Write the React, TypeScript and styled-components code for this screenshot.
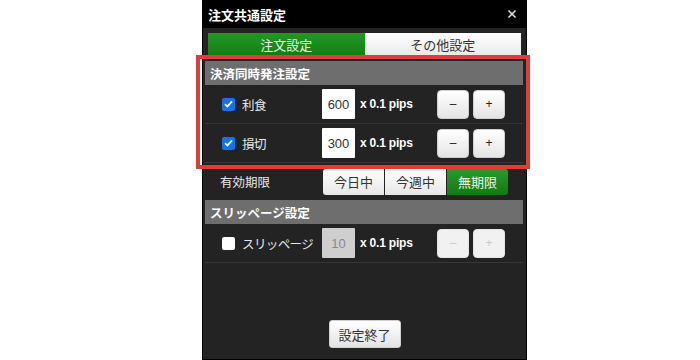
import React, { useState } from 'react';
import styled, { createGlobalStyle } from 'styled-components';

const GlobalStyle = createGlobalStyle`
  body {
    margin: 0;
    background: #fff;
    font-family: "Noto Sans CJK JP", "Noto Sans", sans-serif;
  }
`;

const Page = styled.div`
  position: relative;
  width: 700px;
  height: 360px;
  padding-left: 202px;
  box-sizing: border-box;
  overflow: hidden;
`;

const Panel = styled.div`
  width: 325px;
  height: 360px;
  box-sizing: border-box;
  background: #232323;
  border: 1px solid #000;
  border-top: none;
  display: flex;
  flex-direction: column;
`;

const TitleBar = styled.div`
  height: 28px;
  flex: none;
  background: #000;
  display: flex;
  align-items: center;
  justify-content: space-between;
  padding: 0 9px 0 5px;
  color: #fff;
  font-size: 13px;
  font-weight: 700;
`;

const CloseButton = styled.button`
  border: none;
  background: none;
  padding: 0;
  width: 10px;
  height: 10px;
  display: flex;
  cursor: pointer;
`;

const Tabs = styled.div`
  margin: 5px 5px 0 5px;
  height: 22px;
  display: grid;
  grid-template-columns: 1fr 1fr;
`;

const Tab = styled.button<{ $active?: boolean }>`
  border: none;
  margin: 0;
  padding: 0;
  font-family: inherit;
  font-size: 13px;
  cursor: pointer;
  color: ${(p) => (p.$active ? '#e6f3e6' : '#333')};
  background: ${(p) =>
    p.$active
      ? 'linear-gradient(#259725, #137f13)'
      : 'linear-gradient(#ffffff, #e9e9e9)'};
`;

const SectionHeader = styled.div<{ $top?: number }>`
  margin: ${(p) => p.$top ?? 0}px 3px 0 2px;
  height: 24px;
  flex: none;
  background: #6e6e6e;
  color: #fff;
  font-size: 12.5px;
  font-weight: 700;
  display: flex;
  align-items: center;
  padding-left: 5px;
`;

const Row = styled.div<{ $line?: boolean; $h?: number }>`
  margin: 0 3px 0 2px;
  height: ${(p) => p.$h ?? 38}px;
  flex: none;
  display: flex;
  align-items: center;
  padding-left: 17px;
  border-bottom: ${(p) => (p.$line ? '1px solid #363636' : 'none')};
`;

const CheckCell = styled.label`
  width: 100px;
  display: flex;
  align-items: center;
  color: #e8e8e8;
  font-size: 12.5px;
  letter-spacing: -0.6px;
  cursor: pointer;
`;

const Box = styled.span<{ $on: boolean }>`
  width: 13px;
  height: 13px;
  flex: none;
  border-radius: 2px;
  box-sizing: border-box;
  background: ${(p) => (p.$on ? '#1473e6' : '#fff')};
  display: flex;
  align-items: center;
  justify-content: center;
  margin-right: 7px;
`;

const HiddenInput = styled.input`
  display: none;
`;

const ValueInput = styled.input<{ disabled?: boolean }>`
  width: 33px;
  height: 30px;
  box-sizing: border-box;
  border: none;
  border-radius: 1px;
  padding: 0;
  text-align: center;
  font-family: "Liberation Sans", Arial, sans-serif;
  font-size: 13px;
  color: ${(p) => (p.disabled ? '#8a8a8a' : '#333')};
  background: ${(p) => (p.disabled ? '#cfcfcf' : '#fff')};
  outline: none;
`;

const Unit = styled.span`
  width: 82px;
  padding-left: 5px;
  box-sizing: border-box;
  color: #fff;
  font-family: "Liberation Sans", Arial, sans-serif;
  font-weight: 700;
  font-size: 12px;
  letter-spacing: -0.2px;
`;

const StepButton = styled.button<{ disabled?: boolean }>`
  width: 32px;
  height: 29px;
  margin-right: 4px;
  border: 1px solid ${(p) => (p.disabled ? '#e4e4e4' : '#cfcfcf')};
  border-radius: 4px;
  padding: 0;
  font-family: "Liberation Sans", Arial, sans-serif;
  font-size: 12px;
  color: ${(p) => (p.disabled ? '#cccccc' : '#222')};
  background: ${(p) =>
    p.disabled ? '#f1f1f1' : 'linear-gradient(#ffffff, #e4e4e4)'};
  cursor: ${(p) => (p.disabled ? 'default' : 'pointer')};
`;

const PlainLabel = styled.span`
  width: 103px;
  margin-left: -2px;
  color: #e8e8e8;
  font-size: 12.5px;
`;

const Segments = styled.div`
  display: flex;
  gap: 1px;
`;

const Segment = styled.button<{ $active?: boolean; $first?: boolean; $last?: boolean }>`
  width: 61px;
  height: 26px;
  border: none;
  padding: 0;
  font-family: inherit;
  font-size: 13px;
  cursor: pointer;
  border-radius: ${(p) => (p.$first ? '3px 0 0 3px' : p.$last ? '0 3px 3px 0' : '0')};
  color: ${(p) => (p.$active ? '#eaf6ea' : '#333')};
  background: ${(p) =>
    p.$active
      ? 'linear-gradient(#2a9a2a, #127a12)'
      : 'linear-gradient(#ffffff, #e6e6e6)'};
`;

const Footer = styled.div`
  display: flex;
  justify-content: center;
  margin-top: 57px;
`;

const DoneButton = styled.button`
  width: 72px;
  height: 28px;
  border: 1px solid #cfcfcf;
  border-radius: 3px;
  padding: 0;
  font-family: inherit;
  font-size: 13px;
  color: #333;
  background: linear-gradient(#ffffff, #e3e3e3);
  cursor: pointer;
`;

const Highlight = styled.div`
  position: absolute;
  left: 196px;
  top: 55px;
  width: 334px;
  height: 114px;
  box-sizing: border-box;
  border: 4px solid #e5393a;
  pointer-events: none;
`;

const CheckMark = () => (
  <svg width="9" height="8" viewBox="0 0 9 8">
    <path d="M1 4.2 L3.4 6.5 L8 1.3" fill="none" stroke="#fff" strokeWidth="1.8" />
  </svg>
);

type StepRowProps = {
  label: string;
  value: number;
  checked: boolean;
  onToggle: () => void;
  disabled?: boolean;
  line?: boolean;
};

const StepRow: React.FC<StepRowProps> = ({ label, value, checked, onToggle, disabled, line }) => (
  <Row $line={line}>
    <CheckCell>
      <HiddenInput type="checkbox" checked={checked} onChange={onToggle} />
      <Box $on={checked}>{checked && <CheckMark />}</Box>
      {label}
    </CheckCell>
    <ValueInput value={value} disabled={disabled} readOnly />
    <Unit>x 0.1 pips</Unit>
    <StepButton disabled={disabled}>–</StepButton>
    <StepButton disabled={disabled}>+</StepButton>
  </Row>
);

const App: React.FC = () => {
  const [take, setTake] = useState(true);
  const [stop, setStop] = useState(true);
  const [slip, setSlip] = useState(false);
  const [expiry, setExpiry] = useState('無期限');
  const options = ['今日中', '今週中', '無期限'];

  return (
    <>
      <GlobalStyle />
      <Page>
        <Panel>
          <TitleBar>
            注文共通設定
            <CloseButton aria-label="close">
              <svg width="10" height="10" viewBox="0 0 10 10">
                <path d="M1.5 1.5 L8.5 8.5 M8.5 1.5 L1.5 8.5" stroke="#e6e6e6" strokeWidth="1.5" />
              </svg>
            </CloseButton>
          </TitleBar>
          <Tabs>
            <Tab $active>注文設定</Tab>
            <Tab>その他設定</Tab>
          </Tabs>
          <SectionHeader $top={6}>決済同時発注設定</SectionHeader>
          <StepRow label="利食" value={600} checked={take} onToggle={() => setTake(!take)} line />
          <StepRow label="損切" value={300} checked={stop} onToggle={() => setStop(!stop)} line />
          <Row $h={37}>
            <PlainLabel>有効期限</PlainLabel>
            <Segments>
              {options.map((o, i) => (
                <Segment
                  key={o}
                  $active={expiry === o}
                  $first={i === 0}
                  $last={i === options.length - 1}
                  onClick={() => setExpiry(o)}
                >
                  {o}
                </Segment>
              ))}
            </Segments>
          </Row>
          <SectionHeader>スリッページ設定</SectionHeader>
          <StepRow label="スリッページ" value={10} checked={slip} onToggle={() => setSlip(!slip)} disabled={!slip} line />
          <Footer>
            <DoneButton>設定終了</DoneButton>
          </Footer>
        </Panel>
        <Highlight />
      </Page>
    </>
  );
};

export default App;
